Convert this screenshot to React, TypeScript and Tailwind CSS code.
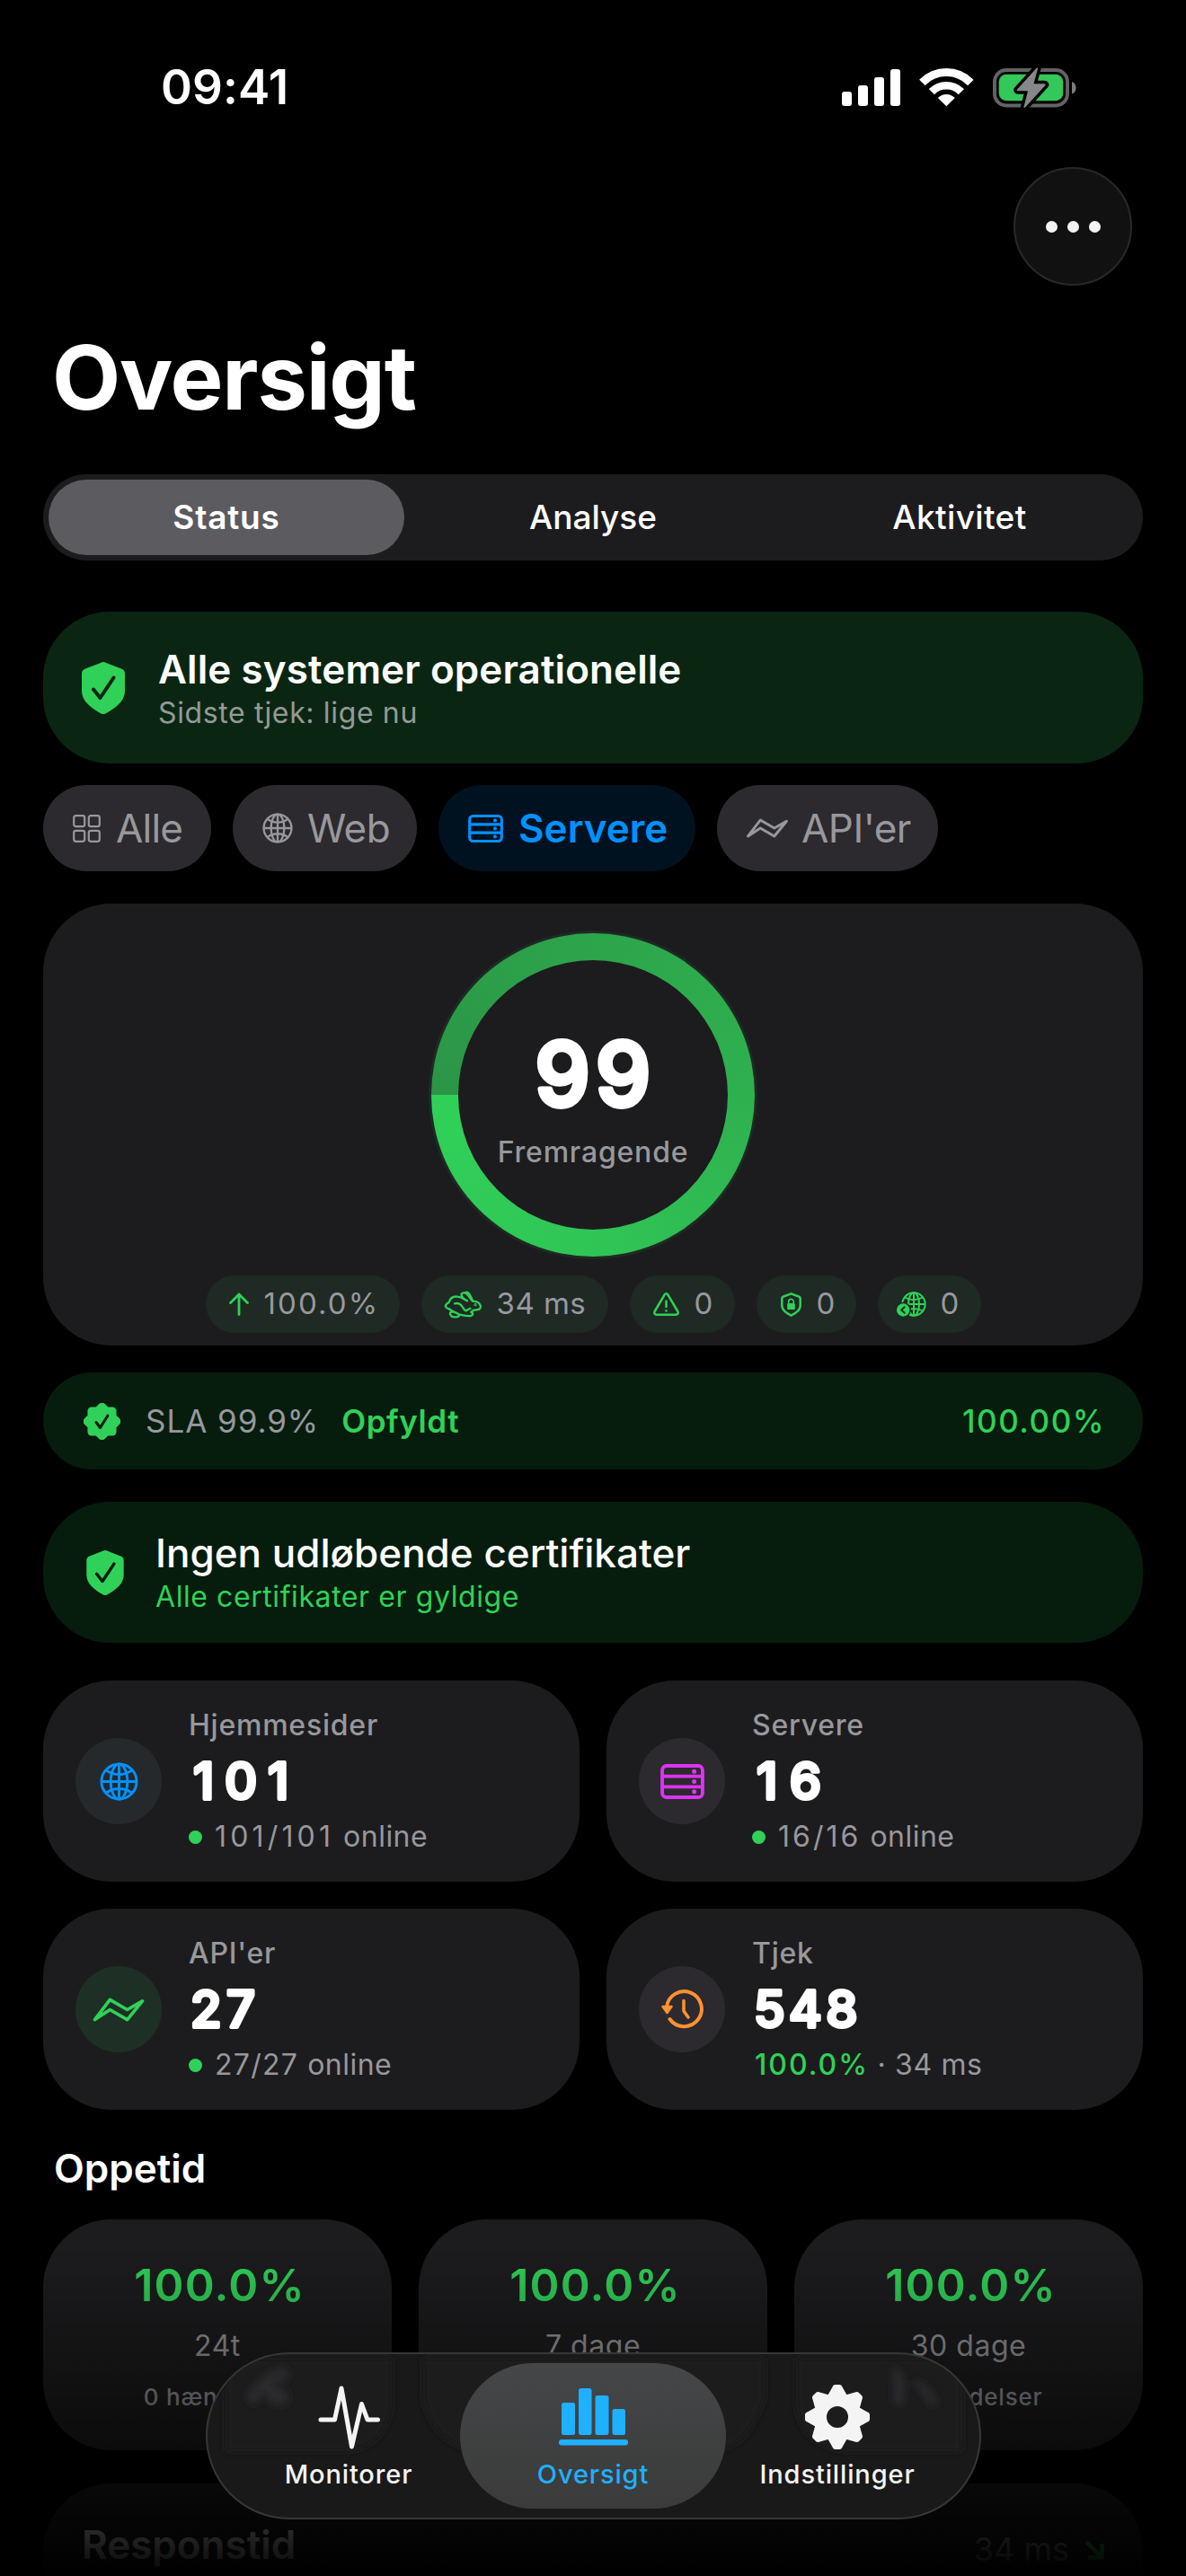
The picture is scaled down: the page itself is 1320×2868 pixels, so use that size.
import type { ReactNode } from "react";

const Globe = ({ className }: { className: string }) => (
  <svg viewBox="0 0 44 44" className={className} fill="none" stroke="currentColor" strokeWidth="3">
    <circle cx="22" cy="22" r="20" />
    <ellipse cx="22" cy="22" rx="9.5" ry="20" />
    <path d="M22 2v40M2 22h40M7.5 9c8 6.5 21 6.5 29 0M7.5 35c8-6.5 21-6.5 29 0" />
  </svg>
);

const Server = ({ className }: { className: string }) => (
  <svg viewBox="0 0 50 40" className={className} fill="none" stroke="currentColor" strokeWidth="4">
    <rect x="2" y="2" width="46" height="36" rx="5" />
    <path d="M2 14h46M2 26h46" />
    <g fill="currentColor" stroke="none">
      <circle cx="38.5" cy="8.5" r="2.6" />
      <circle cx="38.5" cy="20" r="2.6" />
      <circle cx="38.5" cy="31.5" r="2.6" />
    </g>
  </svg>
);

const Zigzag = ({ className }: { className: string }) => (
  <svg viewBox="0 0 59 28" className={className} fill="none" stroke="currentColor" strokeWidth="3.8" strokeLinejoin="round">
    <path d="M2 25.5 19.5 2.5 39.5 14 57 4 39.5 25.5 19.5 14Z" />
  </svg>
);

const Grid = ({ className }: { className: string }) => (
  <svg viewBox="0 0 31 31" className={className} fill="none" stroke="currentColor" strokeWidth="2.2">
    <rect x="1.2" y="1.2" width="12" height="12" rx="2.2" />
    <rect x="17.8" y="1.2" width="12" height="12" rx="2.2" />
    <rect x="1.2" y="17.8" width="12" height="12" rx="2.2" />
    <rect x="17.8" y="17.8" width="12" height="12" rx="2.2" />
  </svg>
);

const ShieldCheck = ({ className, check }: { className: string; check: string }) => (
  <svg viewBox="0 0 48 58" className={className} fill="none">
    <path
      d="M24 0c1 0 2 .4 3 1l17 6.6c3 1.2 4 2.6 4 6V32c0 11.5-10 19-21 25.2-2 1.1-4 1.1-6 0C10 51 0 43.5 0 32V13.6c0-3.4 1-4.8 4-6L21 1c1-.6 2-1 3-1Z"
      fill="#30d158"
    />
    <path d="M13 30.5 20.5 40 35.5 17.5" stroke={check} strokeWidth="4" strokeLinecap="round" strokeLinejoin="round" />
  </svg>
);

const Seal = () => (
  <svg viewBox="0 0 41 41" className="size-[41px]" fill="#30d158">
    <circle cx="20.5" cy="20.5" r="16" />
    {[0, 45, 90, 135, 180, 225, 270, 315].map((a) => (
      <rect key={a} x="14" y="0.5" width="13" height="13" rx="4.5" transform={`rotate(${a} 20.5 20.5) rotate(45 20.5 7)`} />
    ))}
    <path d="M14 21.5 18.5 27.5 27 14" fill="none" stroke="#061c0d" strokeWidth="3" strokeLinecap="round" strokeLinejoin="round" />
  </svg>
);

const History = () => (
  <svg viewBox="0 0 48 44" className="w-[48px] h-[44px]" fill="none" stroke="currentColor" strokeWidth="4" strokeLinecap="round" strokeLinejoin="round">
    <path d="M7 19.5A19.5 19.5 0 1 1 10.5 33" />
    <path d="M26 12.5V24l5 7" strokeWidth="3.5" />
    <path d="M2.5 19h10L7.5 26Z" fill="currentColor" strokeWidth="2.5" />
  </svg>
);

const ArrowUp = () => (
  <svg viewBox="0 0 22 26" className="w-[22px] h-[26px]" fill="none" stroke="#30d158" strokeWidth="2.8" strokeLinecap="round" strokeLinejoin="round">
    <path d="M11 24.5V2M1.5 11.5 11 2l9.5 9.5" />
  </svg>
);

const Rabbit = () => (
  <svg viewBox="-1 -1 127 93" className="w-[43px] h-[31px]" fill="none" stroke="#30d158" strokeWidth="7" strokeLinecap="round" strokeLinejoin="round">
    <path d="M16 60C6 58 1 51 5 46c2-4 6-5 10-8C19 24 30 17 44 19c12 1 19 7 32 14C64 26 55 17 57 10c4-7 14-4 20 2l17 22c9 0 17 2 22 8 6 7 6 16 0 19-7 3-14 1-18 3-4 3-8 5-9 7 8 2 7 10 0 12-14 2-27-2-42-5" />
    <path d="M16 60c5 4 10 6 16 10-12-1-14 2-13 7 2 7 8 11 18 10 8-1 13-1 12-7-1-5-8-6-17-10" />
    <path d="M70 5c10-4 15 6 24 27M34 42c12-3 21 3 26 11 3 6 7 11 12 13l14-8" />
    <circle cx="103" cy="46" r="1.5" />
  </svg>
);

const Warning = () => (
  <svg viewBox="0 0 29 26" className="w-[29px] h-[26px]" fill="none" stroke="#30d158" strokeWidth="2.5" strokeLinecap="round" strokeLinejoin="round">
    <path d="M12.7 2.4 1.7 21c-1 2 0 3.7 2.2 3.7h21.2c2.2 0 3.2-1.7 2.2-3.7L16.3 2.4c-.9-1.5-2.7-1.5-3.6 0Z" />
    <path d="M14.5 9.5v6.5M14.5 20.2v.2" />
  </svg>
);

const ShieldLock = () => (
  <svg viewBox="0 0 23 27" className="w-[23px] h-[27px]" fill="none" stroke="#30d158" strokeWidth="2.5" strokeLinejoin="round">
    <path d="M11.5 1.3 20 4.5c1.2.4 1.7 1 1.7 2.3V15c0 5-5 8-10.2 10.7C6.3 23 1.3 20 1.3 15V6.8c0-1.3.5-1.9 1.7-2.3Z" />
    <rect x="7.2" y="12" width="8.6" height="7" rx="1" fill="#30d158" stroke="none" />
    <path d="M8.7 12.5v-2.3a2.8 2.8 0 0 1 5.6 0v2.3" strokeWidth="1.6" />
  </svg>
);

const GlobeBack = () => (
  <svg viewBox="0 0 33 28" className="w-[33px] h-[28px]" fill="none" stroke="#30d158" strokeWidth="2">
    <circle cx="19" cy="14" r="12.7" />
    <ellipse cx="19" cy="14" rx="6" ry="12.7" />
    <path d="M19 1.3v25.4M6.3 14h25.4M9 6.5c6 3.5 14 3.5 20 0M9 21.5c6-3.5 14-3.5 20 0" />
    <circle cx="7.2" cy="20.5" r="8.8" fill="#1e2a23" stroke="none" />
    <circle cx="7.2" cy="20.5" r="7.2" fill="#30d158" stroke="none" />
    <path d="M8.7 17.2 5.3 20.5l3.4 3.3" stroke="#1e2a23" strokeLinecap="round" strokeLinejoin="round" />
  </svg>
);

const Pulse = () => (
  <svg viewBox="0 0 69 72" className="w-[69px] h-[72px]" fill="none" stroke="currentColor" strokeWidth="5" strokeLinecap="round" strokeLinejoin="round">
    <path d="M3 39h15.5L26 4l11.5 65L48.500 21.500 55 39h11.500" />
  </svg>
);

const Bars = () => (
  <svg viewBox="0 0 77 64" className="w-[77px] h-[64px]" fill="currentColor">
    <rect x="3" y="16" width="15" height="36" rx="2.5" />
    <rect x="22" y="0" width="14.5" height="52" rx="2.5" />
    <rect x="40.5" y="8" width="15" height="44" rx="2.5" />
    <rect x="59.5" y="23" width="14.5" height="29" rx="2.5" />
    <rect x="0" y="57" width="77" height="6.5" rx="3" />
  </svg>
);

const Gear = () => (
  <svg viewBox="0 0 72 72" className="size-[72px]" fill="currentColor">
    {[0, 45, 90, 135, 180, 225, 270, 315].map((a) => (
      <path key={a} d="M24 14 30 3.5C30.900 1 32.200 0 33.500 0h5c1.300 0 2.600 1 3.500 3.500L48 14Z" transform={`rotate(${a} 36 36)`} />
    ))}
    <path fillRule="evenodd" d="M36 9.500a26.500 26.500 0 1 0 0 53 26.500 26.500 0 0 0 0-53Zm0 14.500a12 12 0 1 1 0 24 12 12 0 0 1 0-24Z" />
  </svg>
);

const StatusIcons = () => (
  <svg viewBox="0 0 262 46" className="w-[262px] h-[46px]" fill="#fff">
    <rect x="0" y="27" width="11" height="16" rx="3" />
    <rect x="18" y="20" width="11" height="23" rx="3" />
    <rect x="36" y="11" width="11" height="32" rx="3" />
    <rect x="54" y="2" width="11" height="41" rx="3" />
    <clipPath id="wedge">
      <path d="M116.300 43.200 72 0V-10H161V0Z" />
    </clipPath>
    <g clipPath="url(#wedge)" fill="none" stroke="#fff">
      <circle cx="116.3" cy="43" r="37.4" strokeWidth="9" />
      <circle cx="116.3" cy="43" r="22.8" strokeWidth="8.5" />
      <circle cx="116.3" cy="43" r="6.5" strokeWidth="13" />
    </g>
    <rect x="170" y="3" width="81" height="39.5" rx="13" fill="none" stroke="#636366" strokeWidth="4" />
    <rect x="174.7" y="7.7" width="71.6" height="29.5" rx="8.5" fill="#34c759" />
    <path d="M256 16c6 1.500 6 12 0 13.500Z" fill="#7c7c80" />
    <path
      d="M216.500 1 195 24.500c-.8 1 0 1.700 1 1.700h11L202.500 44c-.3 1 .8 1.400 1.500.6L226.500 20c.8-1 0-1.700-1-1.700h-12L218 1.700c.2-1-.8-1.500-1.500-.7Z"
      fill="#858789"
      stroke="#000"
      strokeWidth="7"
      strokeLinejoin="round"
      paintOrder="stroke"
    />
  </svg>
);

// Digits with softened corners: a round-joined outline over a lighter weight
const RoundNumber = ({ value, x, spacing }: { value: string; x: number; spacing: string }) => (
  <svg className="w-[200px] h-[78px] overflow-visible">
    <text
      x={x}
      y="59"
      fill="#fff"
      stroke="#fff"
      strokeWidth="4"
      strokeLinejoin="round"
      className={`text-[56px] font-medium ${spacing}`}
    >
      {value}
    </text>
  </svg>
);

const filters = [
  { label: "Alle", box: "w-[187px] gap-[17px] bg-[#2c2a2e] text-[#98989c]", text: "tracking-[-0.018em]", icon: <Grid className="size-[31px]" /> },
  { label: "Web", box: "w-[205px] gap-[16px] bg-[#2c2a2e] text-[#98989c]", text: "tracking-[-0.012em]", icon: <Globe className="size-[34px]" /> },
  { label: "Servere", box: "w-[286px] gap-[17px] bg-[#00111f] text-[#0091ff]", text: "font-semibold", icon: <Server className="w-[39px] h-[31px]" /> },
  { label: "API'er", box: "w-[246px] gap-[15px] bg-[#2c2a2e] text-[#98989c]", text: "tracking-[-0.012em]", icon: <Zigzag className="w-[46px] h-[22px]" /> },
];

const pills = [
  { value: "100.0%", box: "w-[216px] pl-[26px] gap-[17px] tracking-[0.064em]", icon: <ArrowUp /> },
  { value: "34 ms", box: "w-[208px] pl-[25px] gap-[16px] tracking-[0.015em]", icon: <Rabbit /> },
  { value: "0", box: "w-[117px] pl-[26px] gap-[17px]", icon: <Warning /> },
  { value: "0", box: "w-[111px] pl-[27px] gap-[17px]", icon: <ShieldLock /> },
  { value: "0", box: "w-[115px] pl-[21px] gap-[16px]", icon: <GlobeBack /> },
];

const stats: {
  label: string;
  value: string;
  x: number;
  spacing: string;
  online?: string;
  onlineSpacing?: string;
  circle: string;
  icon: ReactNode;
}[] = [
  {
    label: "Hjemmesider",
    value: "101",
    x: 5,
    spacing: "tracking-[0.21em]",
    online: "101/101",
    onlineSpacing: "tracking-[0.130em]",
    circle: "bg-[#25292b] text-[#0091ff]",
    icon: <Globe className="size-[43px]" />,
  },
  {
    label: "Servere",
    value: "16",
    x: 5,
    spacing: "tracking-[0.24em]",
    online: "16/16",
    onlineSpacing: "tracking-[0.095em]",
    circle: "bg-[#2c2a2e] text-[#db34f2]",
    icon: <Server className="w-[49px] h-[39px]" />,
  },
  {
    label: "API'er",
    value: "27",
    x: 2,
    spacing: "tracking-[0.10em]",
    online: "27/27",
    onlineSpacing: "tracking-[0.040em]",
    circle: "bg-[#1e3025] text-[#30d158]",
    icon: <Zigzag className="w-[58px] h-[27px]" />,
  },
  { label: "Tjek", value: "548", x: 2, spacing: "tracking-[0.080em]", circle: "bg-[#2c2a2e] text-[#ff9230]", icon: <History /> },
];

const uptime = ["24t", "7 dage", "30 dage"];

const tabs = [
  { label: "Monitorer", box: "text-[#f4f4f4]", icon: <Pulse /> },
  { label: "Oversigt", box: "bg-gradient-to-b from-[#454648] to-[#3a3b3a] text-[#1fb0ff]", icon: <Bars /> },
  { label: "Indstillinger", box: "text-[#f4f4f4]", icon: <Gear /> },
];

export default function App() {
  return (
    <div className="relative w-[1320px] h-[2868px] overflow-hidden bg-black text-white px-12 font-['Inter',sans-serif]">
      {/* STATUS BAR */}
      <div className="h-[186px] pt-[10px] pl-[131px] pr-[73px] flex items-center justify-between">
        <span className="text-[53px] font-semibold tracking-[0.002em]">09:41</span>
        <StatusIcons />
      </div>

      {/* TOOLBAR */}
      <div className="flex justify-end pr-3">
        <button className="size-[132px] rounded-full bg-[#111112] border-2 border-[#29292b] flex items-center justify-center gap-[11px]">
          <i className="size-[13px] rounded-full bg-[#f4f4f4]" />
          <i className="size-[13px] rounded-full bg-[#f4f4f4]" />
          <i className="size-[13px] rounded-full bg-[#f4f4f4]" />
        </button>
      </div>

      <h1 className="h-[210px] pt-[42px] pl-[10px] text-[99px] leading-[120px] font-bold tracking-[-0.012em]">Oversigt</h1>

      {/* SEGMENTS */}
      <div className="h-24 p-[6px] rounded-full bg-[#1c1c1e] flex items-center text-[37px] font-medium">
        <div className="w-[396px] h-full rounded-full bg-[#5b5b60] flex items-center justify-center font-semibold tracking-[0.022em]">Status</div>
        <div className="w-[420px] text-center">Analyse</div>
        <div className="flex-1 text-center tracking-[0.010em]">Aktivitet</div>
      </div>

      {/* BANNER */}
      <div className="mt-[57px] h-[169px] rounded-[74px] bg-[#0a2612] flex items-center pl-[43px] gap-[37px]">
        <ShieldCheck className="w-[48px] h-[58px]" check="#0a2612" />
        <div className="pt-[3px]">
          <div className="text-[44px] leading-[54px] font-semibold tracking-[0.002em]">Alle systemer operationelle</div>
          <div className="text-[32px] leading-[44px] tracking-[0.020em] text-[#939a98]">Sidste tjek: lige nu</div>
        </div>
      </div>

      {/* FILTERS */}
      <div className="mt-6 flex gap-6">
        {filters.map((f) => (
          <div key={f.label} className={`h-24 rounded-full flex items-center pl-[33px] text-[44px] whitespace-nowrap ${f.box}`}>
            {f.icon}
            <span className={f.text}>{f.label}</span>
          </div>
        ))}
      </div>

      {/* SCORE */}
      <div className="mt-9 h-[492px] pt-[30px] rounded-[76px] bg-[#1c1c1e] flex flex-col items-center">
        <div className="size-[366px] p-[3px] rounded-full bg-[#1e2a23]">
          <div className="size-full p-[30px] rounded-full bg-[conic-gradient(from_270deg,#2b9547,#2da54b_25%,#2fb04f_50%,#30c556_75%,#30d158)]">
            <div className="size-full rounded-full bg-[#1c1c1e] flex flex-col items-center pt-[72px]">
              <svg className="w-[200px] h-[110px] overflow-visible">
                <text
                  x="103"
                  y="90"
                  textAnchor="middle"
                  fill="#fff"
                  stroke="#fff"
                  strokeWidth="6"
                  strokeLinejoin="round"
                  className="text-[97px] font-medium tracking-[0.065em]"
                >
                  99
                </text>
              </svg>
              <div className="mt-[11px] text-[32px] leading-[42px] font-medium tracking-[0.025em] text-[#98989c]">Fremragende</div>
            </div>
          </div>
        </div>
        <div className="mt-[18px] flex gap-6">
          {pills.map((p, i) => (
            <div key={i} className={`h-16 rounded-full bg-[#1e2a23] flex items-center text-[33px] text-[#98989f] whitespace-nowrap ${p.box}`}>
              {p.icon}
              <span>{p.value}</span>
            </div>
          ))}
        </div>
      </div>

      {/* SLA */}
      <div className="mt-[30px] h-[108px] rounded-full bg-[#061c0d] flex items-center pl-[45px] pr-[42px] text-[35px]">
        <Seal />
        <span className="ml-[28px] tracking-[0.027em] text-[#98989f]">SLA 99.9%</span>
        <span className="ml-[25px] font-semibold tracking-[0.017em] text-[#30d158]">Opfyldt</span>
        <span className="ml-auto font-medium tracking-[0.043em] text-[#30d158]">100.00%</span>
      </div>

      {/* CERTIFICATES */}
      <div className="mt-9 h-[157px] rounded-[74px] bg-[#061c0d] flex items-center pl-[48px] gap-[35px]">
        <ShieldCheck className="w-[42px] h-[50px]" check="#061c0d" />
        <div className="pt-[3px]">
          <div className="text-[44px] leading-[52px] font-medium">Ingen udløbende certifikater</div>
          <div className="text-[32px] leading-[46px] tracking-[0.018em] text-[#30d158]">Alle certifikater er gyldige</div>
        </div>
      </div>

      {/* STATS */}
      <div className="mt-[42px] grid grid-cols-2 gap-[30px]">
        {stats.map((s) => (
          <div key={s.label} className="h-[224px] rounded-[76px] bg-[#1c1c1e] pl-9 flex items-center gap-[30px]">
            <div className={`size-24 rounded-full flex items-center justify-center ${s.circle}`}>{s.icon}</div>
            <div className="text-[32px] leading-[46px] text-[#98989c]">
              <div className="font-medium tracking-[0.024em]">{s.label}</div>
              <RoundNumber value={s.value} x={s.x} spacing={s.spacing} />
              {s.online ? (
                <div className="flex items-center">
                  <i className="mr-[14px] size-[15px] rounded-full bg-[#30d158]" />
                  <span className={s.onlineSpacing}>{s.online}</span>
                  <span className="ml-[10px] tracking-[0.015em]">online</span>
                </div>
              ) : (
                <div className="pl-[3px] tracking-[0.020em]">
                  <span className="font-medium tracking-[0.062em] text-[#30d158]">100.0%</span> · 34 ms
                </div>
              )}
            </div>
          </div>
        ))}
      </div>

      {/* UPTIME */}
      <h2 className="h-[122px] pt-2 pl-3 flex items-center text-[44px] font-semibold">Oppetid</h2>
      <div className="grid grid-cols-3 gap-[30px]">
        {uptime.map((u) => (
          <div key={u} className="h-[257px] pt-[33px] rounded-[76px] bg-[#1c1c1e] text-center text-[#98989c]">
            <div className="pl-[5px] text-[50px] leading-[80px] font-semibold tracking-[0.024em] text-[#30d158]">100.0%</div>
            <div className="text-[32px] leading-[55px] tracking-[0.017em]">{u}</div>
            <div className="text-[26px] leading-[60px] font-medium tracking-[0.030em]">0 hændelser</div>
          </div>
        ))}
      </div>

      {/* RESPONSE TIME */}
      <div className="mt-[37px] h-[400px] rounded-[76px] bg-[#1c1c1e] pl-[43px] pr-[43px]">
        <div className="h-[136px] flex items-center">
          <span className="text-[44px] font-semibold">Responstid</span>
          <span className="ml-auto mt-[10px] text-[36px] text-[#98989c]">34 ms</span>
          <svg viewBox="0 0 22 22" className="ml-[17px] mt-[12px] size-[22px]" fill="none" stroke="#30d158" strokeWidth="4.5">
            <path d="M2 2 19 19M19.5 4v15.5H4" />
          </svg>
        </div>
      </div>

      {/* fade under the tab bar */}
      <div className="absolute inset-x-0 bottom-0 h-[368px] bg-gradient-to-b from-transparent to-black/98" />

      {/* TAB BAR */}
      <div className="absolute left-[229px] top-[2619px] w-[863px] h-[186px] rounded-full bg-[#191919] border-2 border-[#363739] overflow-hidden">
        <svg viewBox="0 0 859 182" className="absolute inset-0 size-full">
          <filter id="soft">
            <feGaussianBlur stdDeviation="4" />
          </filter>
          <g filter="url(#soft)" fill="#1d1e1f">
            <path d="M20 4H205V60Q195 108 150 108H20Z" />
            <path d="M240 4H620V50Q600 108 560 108H300Q250 100 240 50Z" />
            <path d="M655 4H840V108H710Q655 100 655 50Z" />
          </g>
          <g filter="url(#soft)" fill="#2b2c2e">
            <path d="M42 50Q56 20 88 14L90 28 70 34 88 40 90 56 72 56 62 42 54 56Z" />
            <path d="M763 14Q780 18 774 56L764 56ZM786 30Q796 26 814 55L804 57Z" />
          </g>
        </svg>
        <div className="relative h-full py-[10px] pl-[9px] flex">
          {tabs.map((t) => (
            <div key={t.label} className={`w-[296px] shrink-0 pt-[24px] rounded-full flex flex-col items-center not-first:-ml-6 ${t.box}`}>
              <div className="h-[72px] flex items-center">{t.icon}</div>
              <div className="mt-[10px] text-[29px] leading-[36px] font-medium tracking-[0.030em]">{t.label}</div>
            </div>
          ))}
        </div>
      </div>
    </div>
  );
}
